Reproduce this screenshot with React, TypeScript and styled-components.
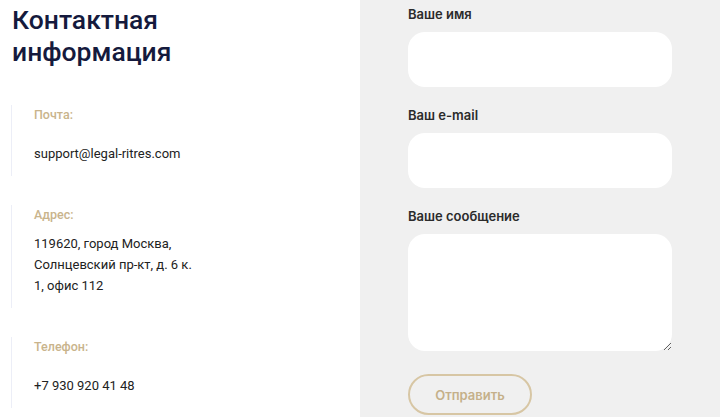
import React from "react";
import styled, { createGlobalStyle } from "styled-components";

const Global = createGlobalStyle`
  html, body { margin: 0; padding: 0; background: #ffffff; }
  body { width: 720px; height: 417px; overflow: hidden; font-family: Roboto, "Liberation Sans", sans-serif; }
  * { box-sizing: border-box; }
`;

const Page = styled.div`
  display: grid;
  grid-template-columns: 360px 360px;
  height: 417px;
  overflow: hidden;
`;

const InfoColumn = styled.section`
  background: #ffffff;
  padding: 4px 0 0 12px;
`;

const Title = styled.h2`
  margin: 0 0 37px;
  font-family: Roboto, "Liberation Sans", sans-serif;
  font-weight: 500;
  font-size: 26.5px;
  line-height: 32px;
  color: #151a3d;
`;

const InfoList = styled.div`
  display: flex;
  flex-direction: column;
  gap: 29px;
`;

const InfoBlock = styled.div`
  border-left: 1px solid #eceef7;
  padding: 0 0 12px 22px;
  margin-left: -1px;
`;

const InfoLabel = styled.div`
  font-size: 12.5px;
  font-weight: 500;
  line-height: 20px;
  color: #c9b48c;
`;

const InfoValue = styled.div<{ $spaced?: boolean }>`
  margin-top: ${(p) => (p.$spaced ? "18px" : "8px")};
  font-size: 13px;
  line-height: 21px;
  color: #222222;
  max-width: 166px;
`;

const FormColumn = styled.form`
  background: #f0f0f0;
  padding: 5px 48px 0 48px;
  display: flex;
  flex-direction: column;
`;

const Field = styled.label`
  display: flex;
  flex-direction: column;
  gap: 9px;
  margin-bottom: 19px;
`;

const FieldLabel = styled.span`
  font-family: Inter, "Liberation Sans", sans-serif;
  font-size: 13px;
  font-weight: 600;
  line-height: 18px;
  color: #2b2b2b;
`;

const TextInput = styled.input`
  width: 264px;
  height: 55px;
  border: none;
  border-radius: 17px;
  background: #ffffff;
  outline: none;
  padding: 0 16px;
  font: inherit;
`;

const TextArea = styled.textarea`
  width: 264px;
  height: 117px;
  border: none;
  border-radius: 17px;
  background: #ffffff;
  outline: none;
  padding: 12px 16px;
  font: inherit;
  resize: vertical;
`;

const SubmitButton = styled.button`
  margin-top: 4px;
  width: 124px;
  height: 41px;
  border: 2px solid #d7c6a4;
  border-radius: 21px;
  background: transparent;
  font-family: Inter, "Liberation Sans", sans-serif;
  font-size: 13px;
  font-weight: 600;
  color: #c5b08a;
  cursor: pointer;
`;

export default function App() {
  return (
    <>
      <Global />
      <Page>
        <InfoColumn>
          <Title>
            Контактная
            <br />
            информация
          </Title>
          <InfoList>
            <InfoBlock>
              <InfoLabel>Почта:</InfoLabel>
              <InfoValue $spaced>support@legal-ritres.com</InfoValue>
            </InfoBlock>
            <InfoBlock>
              <InfoLabel>Адрес:</InfoLabel>
              <InfoValue>119620, город Москва, Солнцевский пр-кт, д. 6 к. 1, офис 112</InfoValue>
            </InfoBlock>
            <InfoBlock>
              <InfoLabel>Телефон:</InfoLabel>
              <InfoValue $spaced>+7 930 920 41 48</InfoValue>
            </InfoBlock>
          </InfoList>
        </InfoColumn>
        <FormColumn onSubmit={(e) => e.preventDefault()}>
          <Field>
            <FieldLabel>Ваше имя</FieldLabel>
            <TextInput type="text" />
          </Field>
          <Field>
            <FieldLabel>Ваш e-mail</FieldLabel>
            <TextInput type="email" />
          </Field>
          <Field>
            <FieldLabel>Ваше сообщение</FieldLabel>
            <TextArea />
          </Field>
          <SubmitButton type="submit">Отправить</SubmitButton>
        </FormColumn>
      </Page>
    </>
  );
}
